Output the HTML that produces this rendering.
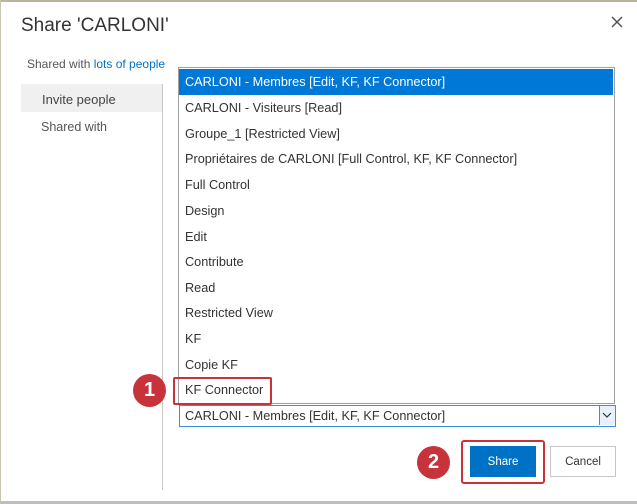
<!DOCTYPE html><html><head><style>
body{margin:0;width:637px;height:504px;overflow:hidden;background:#fff;font-family:"Liberation Sans",sans-serif;position:relative;color:#444}
.a{position:absolute}
.it{position:absolute;left:185px;font-size:12.7px;color:#333;white-space:nowrap}
</style></head><body>
<div class="a" style="left:0;top:0;width:637px;height:2px;background:#b9b59a"></div>
<div class="a" style="left:0;top:0;width:1px;height:504px;background:#c9c6b0"></div>
<div class="a" style="left:0;top:501px;width:637px;height:3px;background:#bdbdbd"></div>
<div class="a" style="left:21px;top:15px;font-size:19px;color:#333">Share 'CARLONI'</div>
<svg class="a" style="left:611px;top:16px" width="12" height="12"><path d="M1 1L11 11M11 1L1 11" stroke="#555" stroke-width="1.5"/></svg>
<div class="a" style="left:27px;top:57px;font-size:12px;color:#555">Shared with <span style="color:#0072c6">lots of people</span></div>
<div class="a" style="left:21px;top:84px;width:141px;height:28px;background:#f0f0f0"></div>
<div class="a" style="left:42px;top:92px;font-size:13px;color:#444">Invite people</div>
<div class="a" style="left:41px;top:120px;font-size:12.5px;color:#555">Shared with</div>
<div class="a" style="left:162px;top:84px;width:1px;height:406px;background:#c6c6c6"></div>
<div class="a" style="left:178px;top:67px;width:435px;height:335px;border:1px solid #a0a0a0;background:#fff"></div>
<div class="a" style="left:179px;top:69px;width:434px;height:26px;background:#0078d7"></div>
<div class="it" style="top:75px;color:#fff">CARLONI - Membres [Edit, KF, KF Connector]</div>
<div class="it" style="top:101px">CARLONI - Visiteurs [Read]</div>
<div class="it" style="top:127px">Groupe_1 [Restricted View]</div>
<div class="it" style="top:152px">Propriétaires de CARLONI [Full Control, KF, KF Connector]</div>
<div class="it" style="top:178px">Full Control</div>
<div class="it" style="top:204px">Design</div>
<div class="it" style="top:230px">Edit</div>
<div class="it" style="top:255px">Contribute</div>
<div class="it" style="top:281px">Read</div>
<div class="it" style="top:306px">Restricted View</div>
<div class="it" style="top:332px">KF</div>
<div class="it" style="top:358px">Copie KF</div>
<div class="it" style="top:383px">KF Connector</div>
<div class="a" style="left:173px;top:377px;width:95px;height:24px;border:2px solid #c8323a;border-radius:2px"></div>
<div class="a" style="left:133px;top:374px;width:33px;height:33px;border-radius:50%;background:#c8323a;color:#fff;font-weight:bold;font-size:20px;text-align:center;line-height:33px">1</div>
<div class="a" style="left:179px;top:405px;width:435px;height:20px;border:1px solid #3c8fd9"></div>
<div class="it" style="top:409px">CARLONI - Membres [Edit, KF, KF Connector]</div>
<div class="a" style="left:599px;top:406px;width:15px;height:19px;border-left:1px solid #3c8fd9;background:#e8f1fb"></div>
<svg class="a" style="left:602px;top:412px" width="10" height="6"><path d="M1 1L5 5L9 1" stroke="#333" fill="none" stroke-width="1.2"/></svg>
<div class="a" style="left:461px;top:440px;width:80px;height:40px;border:2px solid #c8323a;border-radius:3px"></div>
<div class="a" style="left:470px;top:446px;width:66px;height:31px;background:#0072c6;color:#fff;font-size:11.5px;text-align:center;line-height:33px">Share</div>
<div class="a" style="left:550px;top:446px;width:64px;height:29px;border:1px solid #c6c6c6;color:#333;font-size:11.5px;text-align:center;line-height:31px">Cancel</div>
<div class="a" style="left:417px;top:446px;width:33px;height:33px;border-radius:50%;background:#c8323a;color:#fff;font-weight:bold;font-size:20px;text-align:center;line-height:33px">2</div>
</body></html>
